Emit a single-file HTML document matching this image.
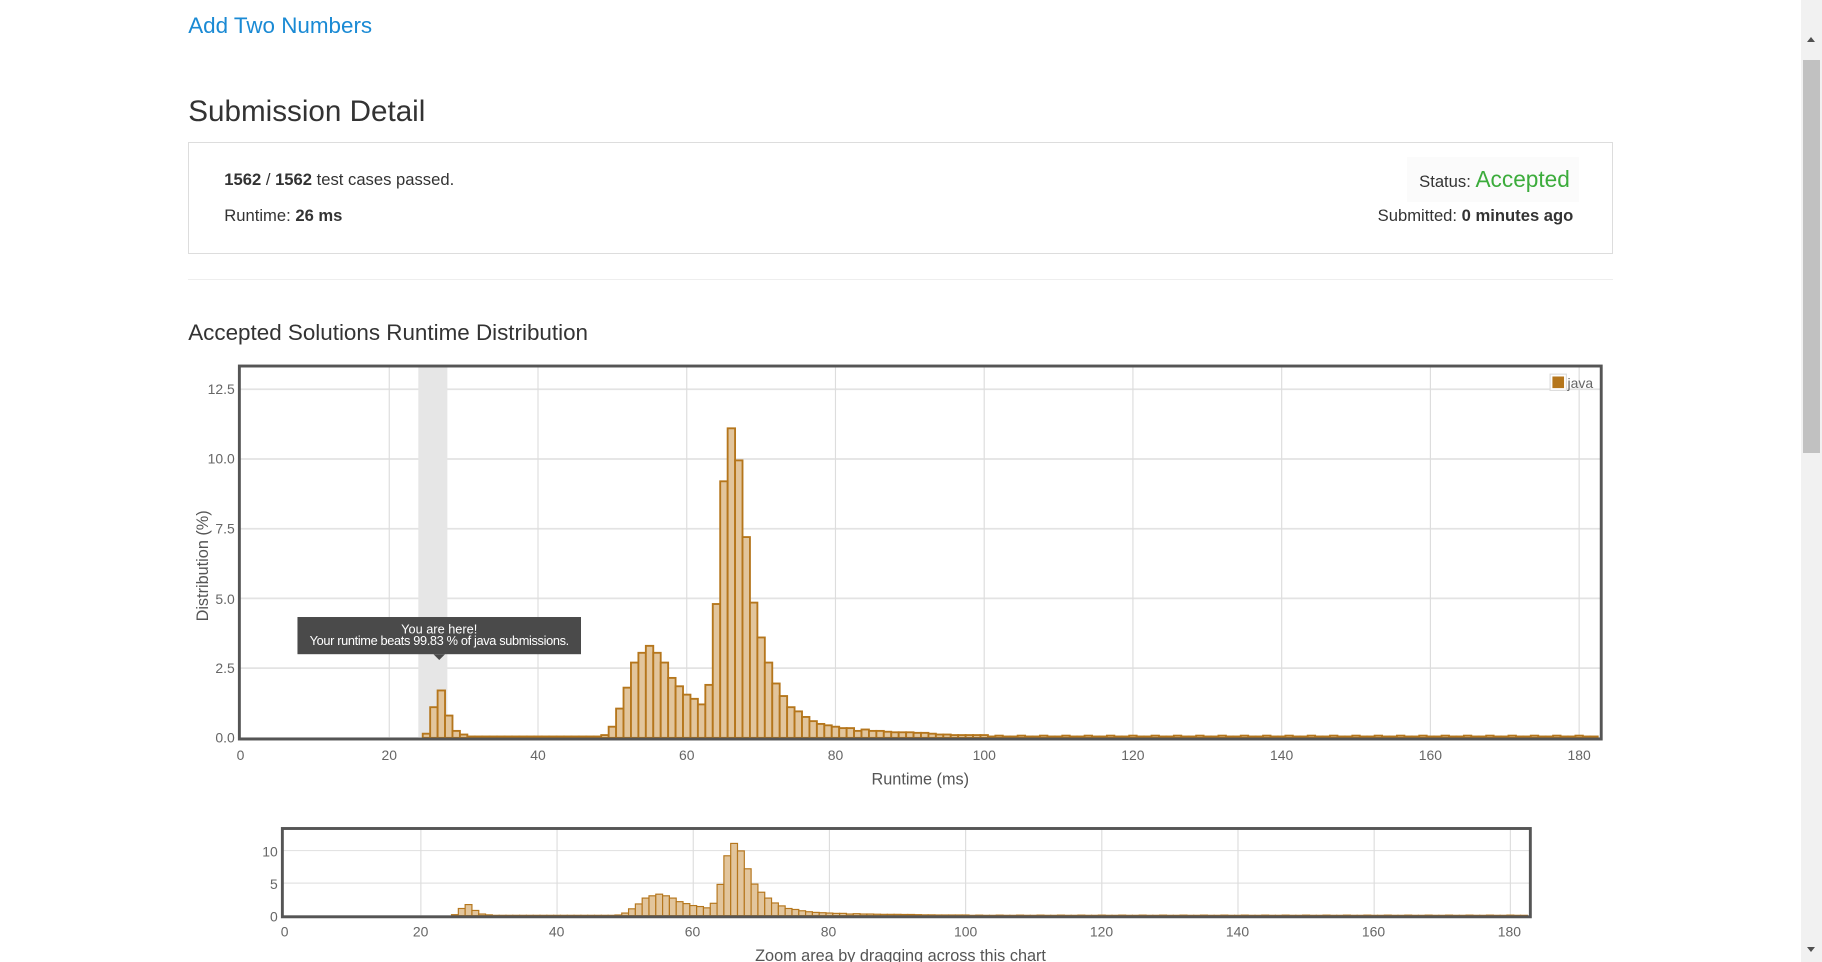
<!DOCTYPE html>
<html><head><meta charset="utf-8">
<style>
html,body{margin:0;padding:0;background:#fff;overflow:hidden;width:1822px;height:962px}
#w{position:relative;width:1568px;height:828px;zoom:1.16199;font-family:"Liberation Sans",Arial,sans-serif;color:#333}
.a{position:absolute;white-space:nowrap}
</style></head><body>
<div id="w">
<div class="a" style="left:162px;top:11px;font-size:19.3px;color:#1a8ad4">Add Two Numbers</div>
<div class="a" style="left:162px;top:82px;font-size:25.5px;color:#333">Submission Detail</div>
<div class="a" style="left:162px;top:122px;width:1224px;height:95px;border:1px solid #ddd"></div>
<div class="a" style="left:193px;top:146px;font-size:14.3px"><b>1562</b> / <b>1562</b> test cases passed.</div>
<div class="a" style="left:193px;top:177px;font-size:14.3px">Runtime: <b>26 ms</b></div>
<div class="a" style="left:1211px;top:135px;width:148px;height:39px;background:#fbfbfb"></div>
<div class="a" style="right:217px;top:143px;font-size:14.3px">Status: <span style="font-size:19.5px;color:#3cac3c">Accepted</span></div>
<div class="a" style="right:214px;top:177px;font-size:14.3px">Submitted: <b>0 minutes ago</b></div>
<div class="a" style="left:162px;top:240px;width:1226px;height:1px;background:#eee"></div>
<div class="a" style="left:162px;top:275px;font-size:19.3px;color:#333">Accepted Solutions Runtime Distribution</div>

<svg class="a" style="left:0;top:0" width="1550" height="828" font-family="Liberation Sans,Arial,sans-serif">
<g id="main"></g>
<rect x="206" y="315" width="1172" height="321" fill="none" stroke="#555" stroke-width="2.5"/>
<g font-size="12" fill="#666" text-anchor="end">
<text x="202" y="339">12.5</text><text x="202" y="399">10.0</text><text x="202" y="459">7.5</text><text x="202" y="520">5.0</text><text x="202" y="579">2.5</text><text x="202" y="639">0.0</text>
</g>
<g font-size="12" fill="#666" text-anchor="middle">
<text x="207" y="654">0</text><text x="335" y="654">20</text><text x="463" y="654">40</text><text x="591" y="654">60</text><text x="719" y="654">80</text><text x="847" y="654">100</text><text x="975" y="654">120</text><text x="1103" y="654">140</text><text x="1231" y="654">160</text><text x="1359" y="654">180</text>
</g>
<text x="792" y="675" font-size="14" fill="#555" text-anchor="middle">Runtime (ms)</text>
<text transform="translate(179,487) rotate(-90)" font-size="14" fill="#555" text-anchor="middle">Distribution (%)</text>
<rect x="1334" y="322" width="14" height="14" fill="#fff" stroke="#ddd"/>
<rect x="1336" y="324" width="10" height="10" fill="#b5761c"/>
<text x="1349" y="334" font-size="12" fill="#666">java</text>
<rect x="256" y="531" width="244" height="32" fill="#4a4a4a"/>
<polygon points="373,563 383,563 378,568" fill="#4a4a4a"/>
<text x="378" y="545" font-size="11" fill="#fff" text-anchor="middle">You are here!</text>
<text x="378" y="555" font-size="11" fill="#fff" text-anchor="middle" letter-spacing="-0.3">Your runtime beats 99.83 % of java submissions.</text>

<g id="nav"></g>
<rect x="243" y="713" width="1074" height="76" fill="none" stroke="#555" stroke-width="2.5"/>
<g font-size="12" fill="#666" text-anchor="end">
<text x="239" y="737">10</text><text x="239" y="765">5</text><text x="239" y="793">0</text>
</g>
<g font-size="12" fill="#666" text-anchor="middle">
<text x="245" y="806">0</text><text x="362" y="806">20</text><text x="479" y="806">40</text><text x="596" y="806">60</text><text x="713" y="806">80</text><text x="831" y="806">100</text><text x="948" y="806">120</text><text x="1065" y="806">140</text><text x="1182" y="806">160</text><text x="1299" y="806">180</text>
</g>
<text x="775" y="827" font-size="14" fill="#555" text-anchor="middle">Zoom area by dragging across this chart</text>
</svg>

<div class="a" style="left:1550px;top:0;width:18px;height:828px;background:#f1f1f1"></div>
<div class="a" style="left:1552px;top:52px;width:14px;height:338px;background:#c1c1c1"></div>
<div class="a" style="left:1555px;top:32px;width:0;height:0;border-left:4px solid transparent;border-right:4px solid transparent;border-bottom:5px solid #505050"></div>
<div class="a" style="left:1555px;top:815px;width:0;height:0;border-left:4px solid transparent;border-right:4px solid transparent;border-top:5px solid #505050"></div>
</div>
<script>
var d={25:.15,26:1.1,27:1.7,28:.8,29:.25,30:.12,49:.1,50:.4,51:1.05,52:1.8,53:2.7,54:3.05,55:3.3,56:3.05,57:2.7,58:2.15,59:1.85,60:1.55,61:1.4,62:1.2,63:1.9,64:4.8,65:9.2,66:11.1,67:9.95,68:7.2,69:4.85,70:3.6,71:2.7,72:1.95,73:1.5,74:1.1,75:.95,76:.75,77:.6,78:.5,79:.45,80:.4,81:.35,82:.35,83:.25,84:.3,85:.25,86:.25,87:.22,88:.2,89:.2,90:.2,91:.18,92:.18,93:.15,94:.12,95:.12,96:.1,97:.1,98:.1,99:.1,100:.1};
function v(i){if(d[i]!=null)return d[i];if(i>30&&i<49)return .05;if(i>100&&i<=182)return (i%3==0?.08:.05);return 0;}
var NS="http://www.w3.org/2000/svg";
function el(g,t,a){var e=document.createElementNS(NS,t);for(var k in a)e.setAttribute(k,a[k]);g.appendChild(e);return e;}
var m=document.getElementById('main');
for(var y=0;y<=12.5;y+=2.5)el(m,'line',{x1:207,x2:1378,y1:635-y*24,y2:635-y*24,stroke:'#e3e3e3','stroke-width':1.5});
for(var x=20;x<=180;x+=20)el(m,'line',{x1:207+x*6.4,x2:207+x*6.4,y1:316,y2:635,stroke:'#ddd'});
el(m,'rect',{x:360,y:316,width:25,height:319,fill:'#e6e6e6'});
var n=document.getElementById('nav');
for(var y=0;y<=10;y+=5)el(n,'line',{x1:244,x2:1316,y1:788-y*5.6,y2:788-y*5.6,stroke:'#e3e3e3'});
for(var x=20;x<=180;x+=20)el(n,'line',{x1:245+x*5.86,x2:245+x*5.86,y1:714,y2:788,stroke:'#ddd'});
for(var i=1;i<=182;i++){var h=v(i);if(!h)continue;
 var hx=207+(i-0.5)*6.4;el(m,'rect',{x:hx,y:635-h*24,width:6.4,height:h*24,fill:'#e2c59c',stroke:'#b5761c','stroke-width':1.6});
 var nx=245+(i-0.5)*5.86;el(n,'rect',{x:nx,y:788-h*5.6,width:5.86,height:h*5.6,fill:'#e2c59c',stroke:'#b5761c','stroke-width':1});
}
</script>
</body></html>
